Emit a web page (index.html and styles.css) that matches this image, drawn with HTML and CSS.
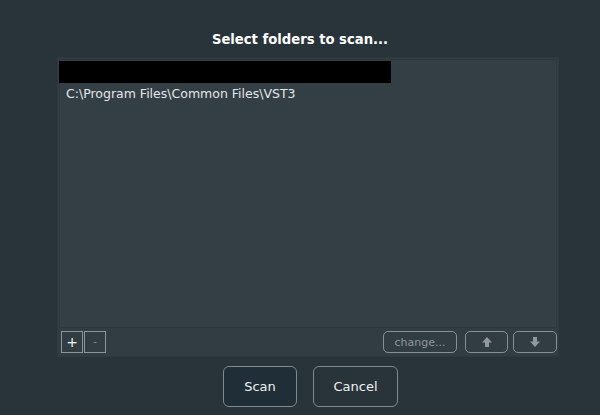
FILE: index.html
```html
<!DOCTYPE html>
<html>
<head>
<meta charset="utf-8">
<link rel="stylesheet" href="styles.css">
</head>
<body>
<div class="dialog">
  <div class="title">Select folders to scan...</div>
  <div class="panel">
    <div class="list">
      <div class="row redacted"></div>
      <div class="row path">C:\Program Files\Common Files\VST3</div>
    </div>
    <div class="toolbar">
      <button class="sq plus">+</button>
      <button class="sq minus">-</button>
      <div class="spacer"></div>
      <button class="rb change">change...</button>
      <button class="rb arrow up"><svg width="12" height="12" viewBox="0 0 12 12"><path d="M6 1 L11 6.5 H8 V11 H4 V6.5 H1 Z" fill="#8f989d"/></svg></button>
      <button class="rb arrow"><svg width="12" height="12" viewBox="0 0 12 12"><path d="M6 11 L11 5.5 H8 V1 H4 V5.5 H1 Z" fill="#8f989d"/></svg></button>
    </div>
  </div>
  <div class="actions">
    <button class="big primary">Scan</button>
    <button class="big">Cancel</button>
  </div>
</div>
</body>
</html>
```
FILE: styles.css
```css
html, body {
  margin: 0;
  padding: 0;
}
body {
  width: 600px;
  height: 415px;
  background: #29333a;
  font-family: "DejaVu Sans", Verdana, sans-serif;
  overflow: hidden;
}
.dialog {
  display: flex;
  flex-direction: column;
}
.title {
  color: #ffffff;
  font-weight: bold;
  font-size: 13.2px;
  text-align: center;
  padding-top: 31px;
  height: 26px;
  line-height: 18px;
}
.panel {
  margin-left: 57px;
  width: 500px;
  height: 298px;
  background: #323c43;
  border: 1px solid #2e383f;
  display: flex;
  flex-direction: column;
}
.list {
  margin: 1px 1px 0 1px;
  height: 266px;
  border: 1px solid #2d373d;
  background: #333e45;
  display: flex;
  flex-direction: column;
  padding-top: 1px;
}
.row {
  height: 22px;
}
.redacted {
  width: 332px;
  margin-left: -1px;
  background: #000000;
}
.path {
  color: #e3e7e9;
  font-size: 12.5px;
  line-height: 22px;
  padding-left: 6px;
  font-family: "DejaVu Sans", sans-serif;
}
.toolbar {
  display: flex;
  align-items: center;
  padding: 3px 1px 0 3px;
  gap: 1px;
}
button {
  font-family: "DejaVu Sans", sans-serif;
  background: transparent;
  padding: 0;
  margin: 0;
  cursor: default;
}
.sq {
  width: 22px;
  height: 22px;
  border: 1px solid #8b9599;
  color: #f2f4f5;
  font-size: 14px;
  line-height: 18px;
}
.minus {
  color: #858f94;
  font-size: 10px;
}
.spacer {
  flex: 1;
}
.rb {
  height: 22px;
  border: 1px solid #858f94;
  border-radius: 5px;
  display: flex;
  align-items: center;
  justify-content: center;
}
.change {
  width: 74px;
  color: #8f989d;
  font-size: 11px;
  margin-right: 3px;
}
.arrow {
  width: 44px;
  margin-left: 4px;
}
.arrow.up {
  width: 43px;
}
.actions {
  display: flex;
  gap: 16px;
  margin-top: 9px;
  margin-left: 223px;
}
.big {
  height: 41px;
  border: 1px solid #7f898e;
  border-radius: 6px;
  color: #eef1f2;
  font-size: 13px;
  background: #29333a;
}
.big.primary {
  width: 74px;
  background: #1f2e37;
}
.big:not(.primary) {
  width: 85px;
}
```
